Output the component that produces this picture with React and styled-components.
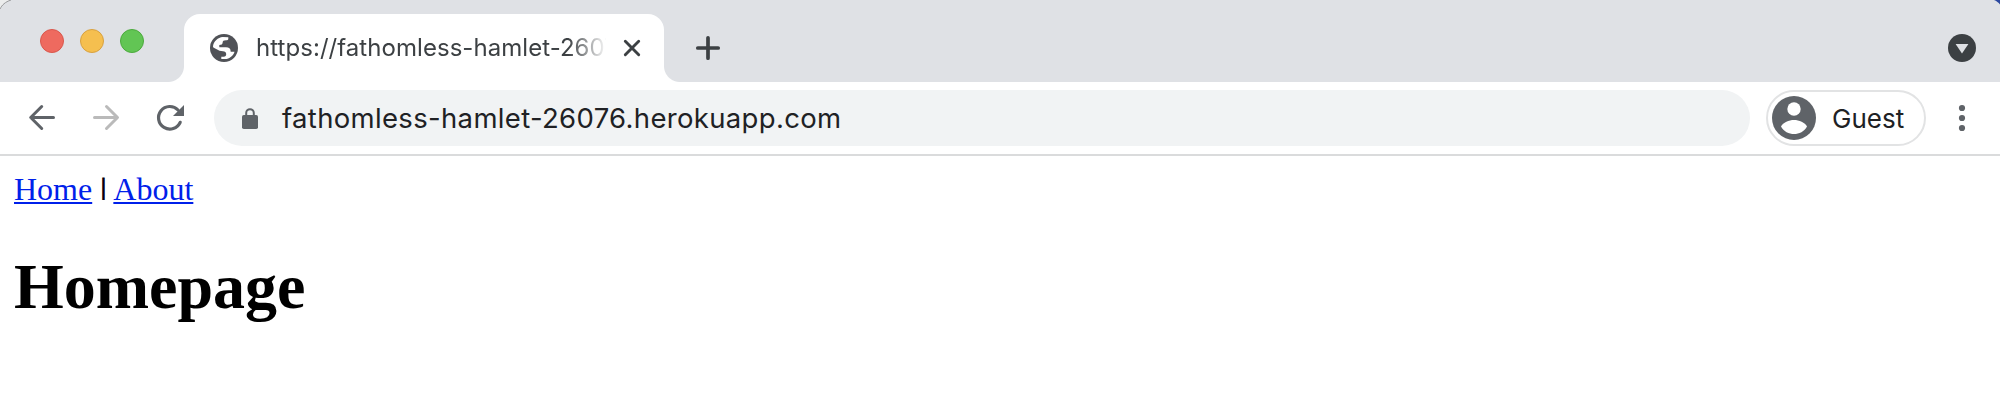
import React from 'react';
import styled, { createGlobalStyle } from 'styled-components';

const GlobalStyle = createGlobalStyle`
  * { box-sizing: border-box; }
  body { margin: 0; background: #fff; overflow: hidden; }
`;

const ui = '"Inter", "Liberation Sans", sans-serif';

const Window = styled.div`
  position: relative;
  width: 2000px;
  height: 418px;
  background: #fff;
  overflow: hidden;
`;

const TabStrip = styled.header`
  display: flex;
  align-items: flex-start;
  height: 82px;
  padding-right: 24px;
  background: #dfe1e5;
`;

const Lights = styled.div`
  display: flex;
  gap: 16px;
  width: 184px;
  padding: 29px 0 0 40px;
`;

const Light = styled.span`
  width: 24px;
  height: 24px;
  border-radius: 50%;
  background: ${(p) => p.$fill};
  border: 1px solid ${(p) => p.$edge};
`;

const Tab = styled.div`
  position: relative;
  display: flex;
  align-items: center;
  width: 480px;
  height: 68px;
  margin-top: 14px;
  padding: 0 22px 0 26px;
  border-radius: 16px 16px 0 0;
  background: #fff;
  &::before, &::after {
    content: '';
    position: absolute;
    bottom: 0;
    width: 16px;
    height: 16px;
  }
  &::before {
    left: -16px;
    background: radial-gradient(circle at 0 0, transparent 15.5px, #fff 16.5px);
  }
  &::after {
    right: -16px;
    background: radial-gradient(circle at 100% 0, transparent 15.5px, #fff 16.5px);
  }
`;

const TabTitle = styled.span`
  width: 350px;
  margin: 0 16px 0 18px;
  overflow: hidden;
  white-space: nowrap;
  font: 400 24px/30px ${ui};
  letter-spacing: 0.05px;
  color: #3c4043;
  -webkit-mask-image: linear-gradient(to right, #000 312px, transparent 351px);
  mask-image: linear-gradient(to right, #000 312px, transparent 351px);
`;

const Icon = styled.svg`
  display: block;
  flex: none;
  width: ${(p) => p.$w}px;
  height: ${(p) => p.$h || p.$w}px;
`;

const NewTab = styled.div`
  padding: 34px 0 0 30px;
`;

const TabSearch = styled.div`
  margin-left: auto;
  padding-top: 34px;
`;

const Toolbar = styled.nav`
  display: flex;
  align-items: center;
  height: 74px;
  padding: 0 22px 0 26px;
  border-bottom: 2px solid #dadbdc;
`;

const NavButtons = styled.div`
  display: flex;
  gap: 32px;
  width: 188px;
`;

const AddressBar = styled.div`
  display: flex;
  align-items: center;
  width: 1536px;
  height: 56px;
  padding-left: 28px;
  border-radius: 28px;
  background: #f1f3f4;
`;

const Url = styled.span`
  margin-left: 24px;
  font: 400 27.5px/34px ${ui};
  letter-spacing: 0.33px;
  color: #202124;
`;

const Profile = styled.div`
  display: flex;
  align-items: center;
  width: 160px;
  height: 56px;
  margin-left: 16px;
  padding-left: 4px;
  border: 2px solid #e2e3e4;
  border-radius: 28px;
`;

const ProfileName = styled.span`
  margin-left: 16px;
  padding-top: 1px;
  font: 400 26px/34px ${ui};
  color: #202124;
`;

const Menu = styled.div`
  margin-left: 24px;
`;

const Page = styled.main`
  padding: 15px 14px;
  font-family: "Liberation Serif", "Times New Roman", serif;
  color: #000;
`;

const Links = styled.div`
  font-size: 32px;
  line-height: 36px;
  white-space: pre;
`;

const PageLink = styled.a`
  color: #0020ea;
  text-decoration: underline;
  text-decoration-thickness: 2px;
  text-underline-offset: 2px;
  text-decoration-skip-ink: none;
`;

const Divider = styled.span`
  display: inline-block;
  margin-right: 0.5px;
  clip-path: inset(0 0 7px 0);
  -webkit-text-stroke: 0.8px #000;
`;

const Title = styled.h1`
  margin: 43px 0 0;
  font-size: 64px;
  line-height: 74px;
  font-weight: 700;
`;

const Corner = styled.svg`
  position: absolute;
  top: 0;
  ${(p) => (p.$right ? 'right: 0;' : 'left: 0;')}
  width: 18px;
  height: 18px;
`;

export default function App() {
  return (
    <Window>
      <GlobalStyle />
      <TabStrip>
        <Lights>
          <Light $fill="#ee6a5f" $edge="#d9574c" />
          <Light $fill="#f5bf4f" $edge="#d8a140" />
          <Light $fill="#62c554" $edge="#4caa3d" />
        </Lights>
        <Tab>
          <Icon $w={28} viewBox="0 0 28 28">
            <circle cx="14" cy="14" r="14" fill="#505257" />
            <path d="M3 12.300C3.600 7.500 8 3.300 12.700 3L18.300 3.200V4.800C18.300 6 17.500 6.300 16 6.300C13.500 6.300 12.700 7 12.700 8.300C12.700 10.500 11.300 11 9.300 11V13.300H16C19 13.300 20.700 14.500 20.700 17.700H24.500C23.500 21.500 19.500 25.100 15 25.100H11.300V22.700H13.500C15.500 22.700 16.300 21.500 16.200 20C16 18.200 15 17.500 13 17.300L9.500 16.800L4.700 14.300C3.500 13.800 3 13.300 3 12.300Z" fill="#fff" />
          </Icon>
          <TabTitle>https://fathomless-hamlet-26076.herokuapp.com</TabTitle>
          <Icon $w={20} viewBox="0 0 20 20">
            <path d="M3.300 3.300L16.700 16.700M16.700 3.300L3.300 16.700" stroke="#3c4043" strokeWidth="2.900" strokeLinecap="round" />
          </Icon>
        </Tab>
        <NewTab>
          <Icon $w={28} viewBox="0 0 28 28">
            <path d="M14 3.800V24.200M3.800 14H24.200" stroke="#3c4043" strokeWidth="3.700" strokeLinecap="round" />
          </Icon>
        </NewTab>
        <TabSearch>
          <Icon $w={28} viewBox="0 0 28 28">
            <circle cx="14" cy="14" r="14" fill="#3c4043" />
            <path d="M7.600 10H20.400L14 19.600Z" fill="#dfe1e5" />
          </Icon>
        </TabSearch>
      </TabStrip>
      <Toolbar>
        <NavButtons>
          <Icon $w={32} viewBox="0 0 32 32">
            <path d="M27.500 15.500H5M15.700 4.500L4.700 15.500L15.700 26.500" fill="none" stroke="#5f6368" strokeWidth="3" strokeLinecap="round" strokeLinejoin="round" />
          </Icon>
          <Icon $w={32} viewBox="0 0 32 32">
            <path d="M4.500 15.500H27M16.500 4.500L27.500 15.500L16.500 26.500" fill="none" stroke="#bababa" strokeWidth="3" strokeLinecap="round" strokeLinejoin="round" />
          </Icon>
          <Icon $w={32} viewBox="0 0 32 32">
            <path d="M24 8A11.300 11.300 0 1 0 26.200 20.300" fill="none" stroke="#5f6368" strokeWidth="3.200" strokeLinecap="round" />
            <path d="M30 3V14H19Z" fill="#5f6368" />
          </Icon>
        </NavButtons>
        <AddressBar>
          <Icon $w={16} $h={21} viewBox="0 0 16 21">
            <path d="M4.200 8V5A3.800 3.800 0 0 1 11.800 5V8" fill="none" stroke="#5f6368" strokeWidth="2" />
            <rect y="7" width="16" height="14" rx="1.800" fill="#5f6368" />
          </Icon>
          <Url>fathomless-hamlet-26076.herokuapp.com</Url>
        </AddressBar>
        <Profile>
          <Icon $w={44} viewBox="0 0 44 44">
            <circle cx="22" cy="22" r="22" fill="#5f6368" />
            <circle cx="22" cy="13" r="6.700" fill="#fff" />
            <path d="M9 30.500C11 26.500 17 24 22 24S33 26.500 35 30.500C32.500 35.500 27 38 22 38S11.500 35.500 9 30.500Z" fill="#fff" />
          </Icon>
          <ProfileName>Guest</ProfileName>
        </Profile>
        <Menu>
          <Icon $w={24} $h={28} viewBox="0 0 24 28">
            <circle cx="12" cy="4" r="3.100" fill="#5f6368" />
            <circle cx="12" cy="14" r="3.100" fill="#5f6368" />
            <circle cx="12" cy="24" r="3.100" fill="#5f6368" />
          </Icon>
        </Menu>
      </Toolbar>
      <Page>
        <Links>
          <PageLink>Home</PageLink> <Divider>|</Divider> <PageLink>About</PageLink>
        </Links>
        <Title>Homepage</Title>
      </Page>
      <Corner viewBox="0 0 18 18">
        <path d="M0 0H11C6 1.500 2 4.500 0 9Z" fill="#eceded" />
        <path d="M0 9C2 5 5 2 11 0" fill="none" stroke="#98999b" />
      </Corner>
      <Corner $right viewBox="0 0 18 18">
        <path d="M12 0H18V4.500C16.500 2.500 14.500 1 12 0Z" fill="#2b489f" />
      </Corner>
    </Window>
  );
}
